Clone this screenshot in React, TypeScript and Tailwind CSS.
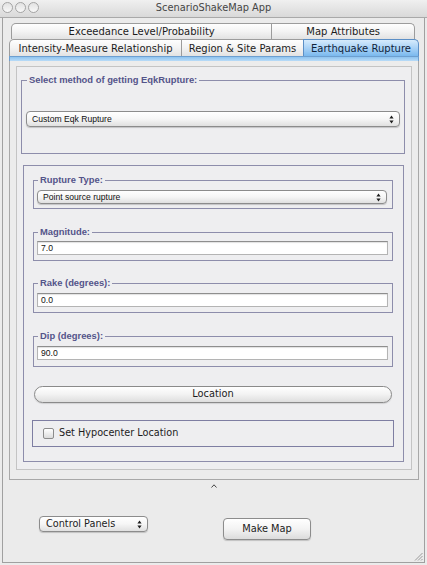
import React from "react";

const AQUA = "font-['DejaVu_Sans',sans-serif]";
const JAVA = "font-['Liberation_Sans',Arial,sans-serif]";

function Arrows() {
  return (
    <svg width="5" height="9" viewBox="0 0 5 9">
      <path d="M2.5 0.5 L4.6 3.4 H0.4Z M2.5 8.5 L4.6 5.6 H0.4Z" fill="#1e1e1e" />
    </svg>
  );
}

function Popup({ text, className, textClass }: { text: string; className: string; textClass: string }) {
  return (
    <div
      className={`flex items-center justify-between rounded-[4px] border border-[#8c8c8c] bg-linear-to-b from-white via-[#f6f6f6] to-[#e0e0e0] shadow-[0_1px_1px_rgba(0,0,0,0.18)] ${className}`}
    >
      <span className={textClass}>{text}</span>
      <span className="flex h-full items-center pr-[5px] pl-[4px]">
        <Arrows />
      </span>
    </div>
  );
}

function Titled({
  title,
  className,
  children,
}: {
  title: string;
  className: string;
  children: React.ReactNode;
}) {
  return (
    <fieldset className={`border border-[#8d8dab] ${className}`}>
      <legend
        className={`ml-[1px] px-[2px] text-[9.4px] leading-[12px] font-bold text-[#54548a] ${JAVA}`}
      >
        {title}
      </legend>
      {children}
    </fieldset>
  );
}

function TextField({ value, className }: { value: string; className: string }) {
  return (
    <div
      className={`flex h-[14px] items-center border border-[#b4b4b4] border-t-[#8e8e8e] bg-white pl-[3px] text-[8.6px] text-[#111] shadow-[inset_0_1px_1px_rgba(0,0,0,0.12)] ${JAVA} ${className}`}
    >
      {value}
    </div>
  );
}

function Tab({
  label,
  w,
  selected,
  first,
  last,
}: {
  label: string;
  w: string;
  selected?: boolean;
  first?: boolean;
  last?: boolean;
}) {
  const base = selected
    ? "bg-linear-to-b from-[#d6ebfc] via-[#a9d2f6] to-[#7ab9ee] border-[#5c8fc6] text-[#10243a]"
    : "bg-linear-to-b from-[#fefefe] via-[#f3f3f3] to-[#e2e2e2] border-[#9c9c9c] text-[#1c1c1c]";
  return (
    <div
      className={`flex h-full items-center justify-center border border-b-0 ${base} ${w} ${
        first ? "rounded-tl-[5px]" : ""
      } ${last ? "rounded-tr-[5px]" : ""} ${first ? "" : "-ml-px"} text-[10px] ${AQUA}`}
    >
      {label}
    </div>
  );
}

export default function App() {
  return (
    <div className={`relative flex h-[565px] w-[427px] flex-col overflow-hidden bg-[#ebebeb] ${AQUA}`}>
      {/* title bar */}
      <div className="relative flex h-[18px] shrink-0 items-center justify-center border-b border-[#a9a9a9] bg-linear-to-b from-[#f0f0f0] to-[#d9d9d9]">
        <div className="absolute left-[2px] top-[2px] flex gap-[2px]">
          {[0, 1, 2].map((i) => (
            <div
              key={i}
              className="h-[11px] w-[11px] rounded-full border border-[#a4a4a4] bg-linear-to-b from-[#e2e2e2] to-[#f8f8f8]"
            />
          ))}
        </div>
        <span className="text-[9.8px] text-[#454545]">ScenarioShakeMap App</span>
      </div>

      {/* window body */}
      <div className="flex flex-1 flex-col border-x border-b border-[#a0a0a0] mx-[2px] mb-[2px]">
        {/* tabs */}
        <div className="mt-[5px] ml-[8px] flex h-[16px] w-[404px]">
          <Tab label="Exceedance Level/Probability" w="w-[262px]" first />
          <Tab label="Map Attributes" w="w-[144px]" last />
        </div>
        <div className="ml-[6px] flex h-[17px] w-[410px]">
          <Tab label="Intensity-Measure Relationship" w="w-[173px]" first />
          <Tab label="Region & Site Params" w="w-[123px]" />
          <Tab label="Earthquake Rupture" w="w-[116px]" selected last />
        </div>
        <div className="ml-[6px] h-[5px] w-[410px] border-x border-t border-[#6d9fd0] bg-linear-to-b from-[#8ec4f0] to-[#b9dbf7]" />

        {/* content pane */}
        <div className="ml-[6px] flex w-[410px] flex-col border-x border-b border-[#a8a8a8] bg-[#ececec] px-[6px] pt-[5px] pb-[9px]">
          <div className="flex flex-col border border-[#c4c4c4] bg-[#eeeef0] pb-[7px]">
            {/* section 1 */}
            <Titled title="Select method of getting EqkRupture:" className="mt-[7px] ml-[4px] mr-[6px] px-[4px] pb-[26px]">
              <Popup
                text="Custom Eqk Rupture"
                className="mt-[25px] h-[16px]"
                textClass={`pl-[5px] text-[8.6px] text-[#111] ${JAVA}`}
              />
            </Titled>

            {/* section 2 */}
            <div className="mt-[11px] ml-[6px] mr-[7px] flex flex-col border border-[#8d8dab] pb-[14px]">
              <Titled title="Rupture Type:" className="mt-[8px] ml-[9px] mr-[10px] pl-[3px] pr-[5px] pb-[4px]">
                <Popup
                  text="Point source rupture"
                  className="mt-[4px] h-[14px]"
                  textClass={`pl-[5px] text-[8.6px] text-[#111] ${JAVA}`}
                />
              </Titled>

              <Titled title="Magnitude:" className="mt-[17px] ml-[9px] mr-[10px] pl-[3px] pr-[4px] pb-[5px]">
                <TextField value="7.0" className="mt-[3px]" />
              </Titled>

              <Titled title="Rake (degrees):" className="mt-[16px] ml-[9px] mr-[10px] pl-[3px] pr-[4px] pb-[5px]">
                <TextField value="0.0" className="mt-[4px]" />
              </Titled>

              <Titled title="Dip (degrees):" className="mt-[17px] ml-[9px] mr-[10px] pl-[3px] pr-[4px] pb-[6px]">
                <TextField value="90.0" className="mt-[4px]" />
              </Titled>

              <div className="mt-[19px] ml-[10px] mr-[11px] flex h-[17px] items-center justify-center rounded-full border border-[#8a8a8a] bg-linear-to-b from-white via-[#f2f2f2] to-[#dedede] text-[9.8px] text-[#1c1c1c] shadow-[0_1px_1px_rgba(0,0,0,0.12)]">
                Location
              </div>

              <div className="mt-[17px] ml-[8px] mr-[9px] flex h-[27px] items-center border border-[#7e7ea2] pl-[10px]">
                <div className="h-[11px] w-[11px] rounded-[2px] border border-[#8c8c8c] bg-linear-to-b from-white to-[#dcdcdc]" />
                <span className="ml-[5px] text-[9.7px] text-[#1c1c1c]">Set Hypocenter Location</span>
              </div>
            </div>
          </div>
        </div>

        {/* splitter caret */}
        <div className="mt-[4px] flex justify-center">
          <svg width="6" height="4" viewBox="0 0 6 4">
            <path d="M0.5 3.5 L3 0.8 L5.5 3.5" fill="none" stroke="#444" strokeWidth="1" />
          </svg>
        </div>

        {/* bottom controls */}
        <div className="mt-[28px] flex items-start">
          <Popup
            text="Control Panels"
            className="ml-[36px] h-[16px] w-[109px]"
            textClass="pl-[6px] text-[9.7px] text-[#1c1c1c]"
          />
          <div className="ml-[75px] mt-[2px] flex h-[22px] w-[88px] items-center justify-center rounded-[4px] border border-[#8c8c8c] bg-linear-to-b from-white via-[#f3f3f3] to-[#dcdcdc] text-[9.8px] text-[#1c1c1c] shadow-[0_1px_1px_rgba(0,0,0,0.18)]">
            Make Map
          </div>
        </div>

        <div className="flex-1" />
        <div className="flex justify-end pr-[1px] pb-[1px]">
          <svg width="9" height="9" viewBox="0 0 9 9">
            <path d="M8.5 1 L1 8.5 M8.5 4 L4 8.5 M8.5 7 L7 8.5" stroke="#9a9a9a" strokeWidth="1" />
          </svg>
        </div>
      </div>
    </div>
  );
}
